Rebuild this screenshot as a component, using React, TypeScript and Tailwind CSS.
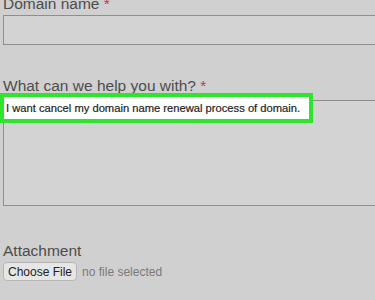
export default function App() {
  return (
    <div className="relative h-[300px] w-[375px] overflow-hidden bg-[#d0d0d0] font-['Liberation_Sans',Arial,sans-serif] text-[#4d4d4d]">
      <div className="pl-[3px]">
        <label className="-mt-[5px] block text-[15.5px] leading-[18px]">
          Domain name <span className="text-[#b0405a]">*</span>
        </label>
        <div className="mt-[2px] h-[30px] w-[390px] border border-[#8e8e8e] bg-[#d3d3d3]" />

        <label className="mt-[32px] block text-[15.5px] leading-[18px]">
          What can we help you with? <span className="text-[#b0405a]">*</span>
        </label>
        <div className="mt-[5px] h-[106px] w-[390px] border border-[#8e8e8e] bg-[#d3d3d3]" />

        <label className="mt-[36px] block text-[15.5px] leading-[18px]">Attachment</label>
        <div className="mt-[2px] flex items-center gap-[5px]">
          <button
            type="button"
            className="h-[19px] rounded-[4px] border border-[#b5b5b5] bg-[#e6e6e6] px-[4px] text-[12px] leading-[16px] text-[#222]"
          >
            Choose File
          </button>
          <span className="text-[12px] text-[#7a7a7a]">no file selected</span>
        </div>
      </div>

      <div className="absolute left-0 top-[93px] flex h-[30px] w-[313px] items-center border-[4px] border-[#2ee52e] bg-white pl-[2px]">
        <span className="whitespace-nowrap text-[11.2px] text-[#1e1e1e] [-webkit-text-stroke:0.2px_#1e1e1e]">
          I want cancel my domain name renewal process of domain.
        </span>
      </div>
    </div>
  );
}
